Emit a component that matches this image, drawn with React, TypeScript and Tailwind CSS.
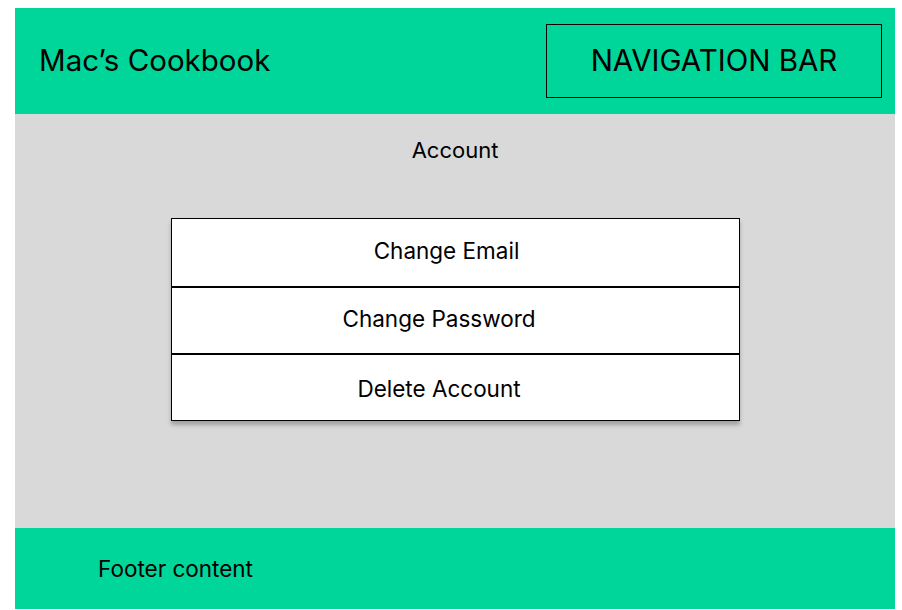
export default function App() {
  const rows = [
    { label: "Change Email", shift: "pr-[17px] pb-[4px]" },
    { label: "Change Password", shift: "pr-[32px] pb-[4px]" },
    { label: "Delete Account", shift: "pr-[32px] pt-[2px]" },
  ];

  return (
    <div className="h-[610px] w-[902px] bg-white pt-[8px] pl-[15px] font-['Inter',sans-serif] text-black">
      <div className="flex w-[880px] flex-col">
        {/* header */}
        <header className="flex h-[106px] items-center justify-between bg-[#00d69a] pl-[24px] pr-[13px]">
          <div className="text-[29.5px] leading-none">Mac’s Cookbook</div>
          <div className="flex h-[74px] w-[336px] items-center justify-center border border-black text-[29.5px] leading-none">
            NAVIGATION BAR
          </div>
        </header>

        {/* main */}
        <main className="flex h-[414px] flex-col items-center bg-[#d9d9d9]">
          <div className="mt-[23px] text-[22px] leading-[26px]">Account</div>
          <div className="mt-[55px] w-[569px] border border-black bg-white shadow-[0_4px_4px_rgba(0,0,0,0.25)]">
            {rows.map((r, i) => (
              <div
                key={r.label}
                className={`flex h-[67px] items-center justify-center text-[22.5px] ${r.shift} ${
                  i > 0 ? "border-t-2 border-black" : ""
                }`}
              >
                {r.label}
              </div>
            ))}
          </div>
        </main>

        {/* footer */}
        <footer className="flex h-[81px] items-center bg-[#00d69a] pl-[83px] text-[22.5px]">
          Footer content
        </footer>
      </div>
    </div>
  );
}
